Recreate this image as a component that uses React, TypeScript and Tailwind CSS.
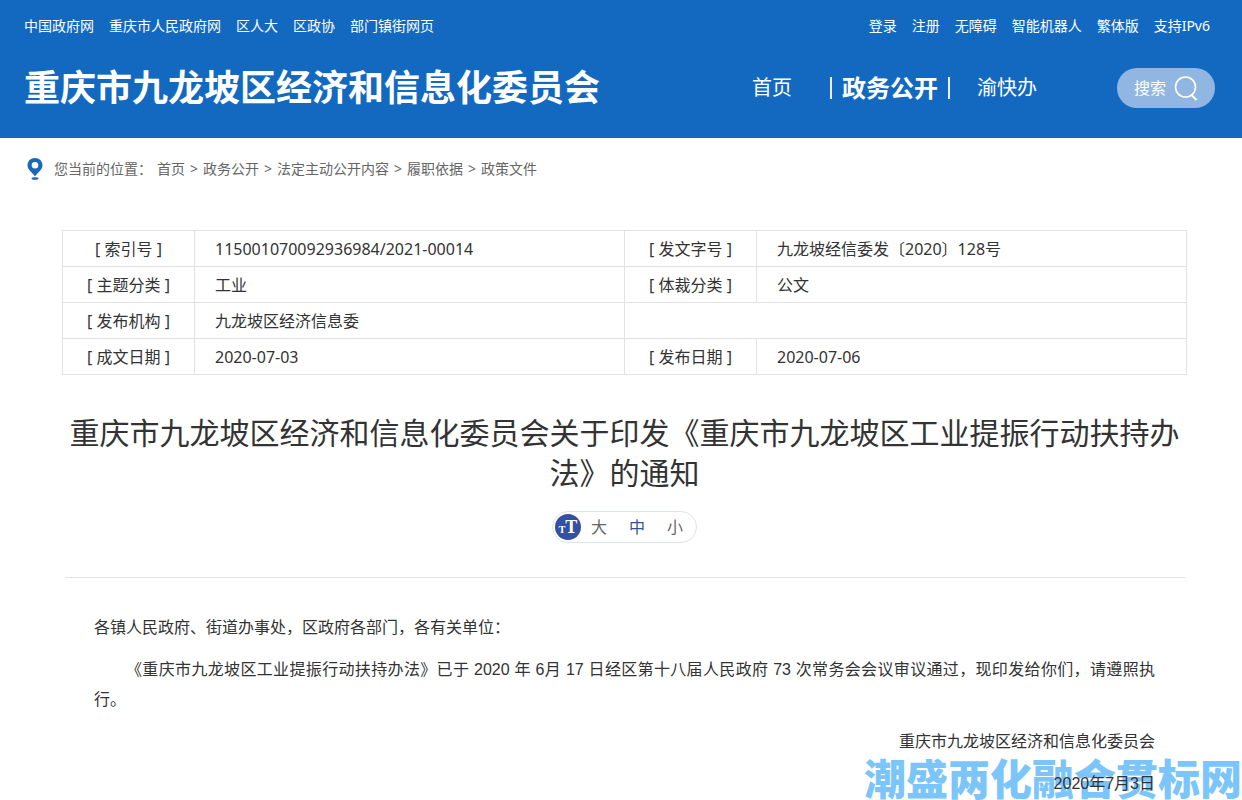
const portalLinks = ["中国政府网", "重庆市人民政府网", "区人大", "区政协", "部门镇街网页"];
const userLinks = ["登录", "注册", "无障碍", "智能机器人", "繁体版", "支持IPv6"];
const crumbs = ["首页", "政务公开", "法定主动公开内容", "履职依据", "政策文件"];

type Field = { label: string; value: string };

const rows: [Field, Field | null][] = [
  [
    { label: "索引号", value: "115001070092936984/2021-00014" },
    { label: "发文字号", value: "九龙坡经信委发〔2020〕128号" },
  ],
  [
    { label: "主题分类", value: "工业" },
    { label: "体裁分类", value: "公文" },
  ],
  [{ label: "发布机构", value: "九龙坡区经济信息委" }, null],
  [
    { label: "成文日期", value: "2020-07-03" },
    { label: "发布日期", value: "2020-07-06" },
  ],
];

export default function App() {
  return (
    <div className="relative isolate min-h-screen overflow-hidden bg-white font-['Noto_Sans','Noto_Sans_CJK_SC',sans-serif] text-[#333]">
      <Header />
      <Breadcrumb />
      <main className="pr-[55px] pl-[62px]">
        <MetaTable />
        <Article />
      </main>
      <div className="absolute right-0 bottom-0 -z-10 text-[42px] leading-[42px] font-black whitespace-nowrap text-[#7cc5fb]">
        潮盛两化融合贯标网
      </div>
    </div>
  );
}

function Header() {
  return (
    <header className="h-[138px] bg-[#1369c0] pr-[27px] pl-6 text-white">
      <div className="flex justify-between pt-4 pr-[5px] text-sm">
        <LinkList items={portalLinks} />
        <LinkList items={userLinks} />
      </div>
      <div className="flex items-center justify-between pt-[25px]">
        <h1 className="text-[36px] leading-[54px] font-bold whitespace-nowrap">
          重庆市九龙坡区经济和信息化委员会
        </h1>
        <div className="flex items-center">
          <nav className="flex items-center text-xl">
            <a href="#">首页</a>
            <a
              href="#"
              className="mr-[27px] ml-[38px] flex items-center gap-2.5 text-2xl leading-9 font-bold"
            >
              <span className="h-[22px] w-0.5 bg-white/90" />
              政务公开
              <span className="h-[22px] w-0.5 bg-white/90" />
            </a>
            <a href="#">渝快办</a>
          </nav>
          <button
            type="button"
            className="ml-20 flex h-10 w-[98px] items-center justify-center gap-2 rounded-full bg-[#91b6e1] text-base"
          >
            搜索
            <SearchIcon />
          </button>
        </div>
      </div>
    </header>
  );
}

function LinkList({ items }: { items: string[] }) {
  return (
    <ul className="flex gap-[15px]">
      {items.map((item) => (
        <li key={item}>
          <a href="#">{item}</a>
        </li>
      ))}
    </ul>
  );
}

function Breadcrumb() {
  return (
    <nav className="flex items-center pt-5 pl-[27px] text-sm leading-[22px] text-[#666]">
      <PinIcon />
      <span className="ml-[11px]">您当前的位置：</span>
      <ol className="ml-[5px] flex">
        {crumbs.map((item, i) => (
          <li key={item}>
            {i > 0 && <span className="mx-[5px]">&gt;</span>}
            <a href="#">{item}</a>
          </li>
        ))}
      </ol>
    </nav>
  );
}

function MetaTable() {
  return (
    <table className="mt-[50px] w-full table-fixed border-collapse text-base">
      <colgroup>
        <col className="w-[132px]" />
        <col />
        <col className="w-[132px]" />
        <col />
      </colgroup>
      <tbody>
        {rows.map(([left, right]) => (
          <tr key={left.label} className="h-9">
            <FieldCells field={left} />
            {right ? (
              <FieldCells field={right} />
            ) : (
              <td colSpan={2} className="border border-[#e2e2e2]" />
            )}
          </tr>
        ))}
      </tbody>
    </table>
  );
}

function FieldCells({ field }: { field: Field }) {
  return (
    <>
      <th scope="row" className="border border-[#e2e2e2] p-0 text-center font-normal">
        [ {field.label} ]
      </th>
      <td className="border border-[#e2e2e2] py-0 pl-5">{field.value}</td>
    </>
  );
}

function Article() {
  return (
    <article className="pt-[38px]">
      <h2 className="text-center text-[30px] leading-10">
        重庆市九龙坡区经济和信息化委员会关于印发《重庆市九龙坡区工业提振行动扶持办法》的通知
      </h2>
      <div className="mx-auto mt-[18px] flex h-8 w-[145px] items-center rounded-full border border-[#dfe3ea] pl-0.5 text-base text-[#666]">
        <TextSizeIcon />
        <div className="ml-2.5 flex gap-[22px]">
          <button type="button">大</button>
          <button type="button" className="text-[#3450a0]">
            中
          </button>
          <button type="button">小</button>
        </div>
      </div>
      <hr className="mt-[34px] mr-0.5 ml-[3px] border-[#e2e2e2]" />
      <div className="space-y-3 pt-[35px] pr-8 pl-8 font-['Liberation_Sans','Noto_Sans_CJK_SC',sans-serif] text-base leading-[30px]">
        <p>各镇人民政府、街道办事处，区政府各部门，各有关单位：</p>
        <p className="text-justify indent-8">
          《重庆市九龙坡区工业提振行动扶持办法》已于 2020 年 6月 17 日经区第十八届人民政府 73
          次常务会会议审议通过，现印发给你们，请遵照执行。
        </p>
        <p className="text-right">重庆市九龙坡区经济和信息化委员会</p>
        <p className="text-right">2020年7月3日</p>
      </div>
    </article>
  );
}

function SearchIcon() {
  return (
    <svg width="24" height="26" viewBox="0 0 24 26" fill="none" stroke="white" strokeWidth="1.6" aria-hidden="true">
      <circle cx="11.5" cy="12" r="10" />
      <path d="M17.500 20l5 5" strokeWidth="2" />
    </svg>
  );
}

function PinIcon() {
  return (
    <svg width="16" height="22" viewBox="0 0 16 22" aria-hidden="true">
      <path
        fill="#1b68b8"
        fillRule="evenodd"
        d="M8 0C3.600 0 0.500 3.200 0.500 7.200c0 4.200 4 6.800 7.500 11 3.500-4.200 7.500-6.800 7.500-11C15.500 3.200 12.400 0 8 0zm0 4a3.300 3.300 0 1 1 0 6.600A3.300 3.300 0 0 1 8 4z"
      />
      <ellipse cx="8" cy="20.500" rx="3.500" ry="1.300" fill="#1b68b8" />
    </svg>
  );
}

function TextSizeIcon() {
  return (
    <span
      aria-hidden="true"
      className="flex size-[26px] items-baseline justify-center rounded-full bg-[#3450a0] font-['Liberation_Serif',serif] leading-[26px] font-bold text-white"
    >
      <span className="text-[10px]">T</span>
      <span className="text-lg leading-[26px]">T</span>
    </span>
  );
}
